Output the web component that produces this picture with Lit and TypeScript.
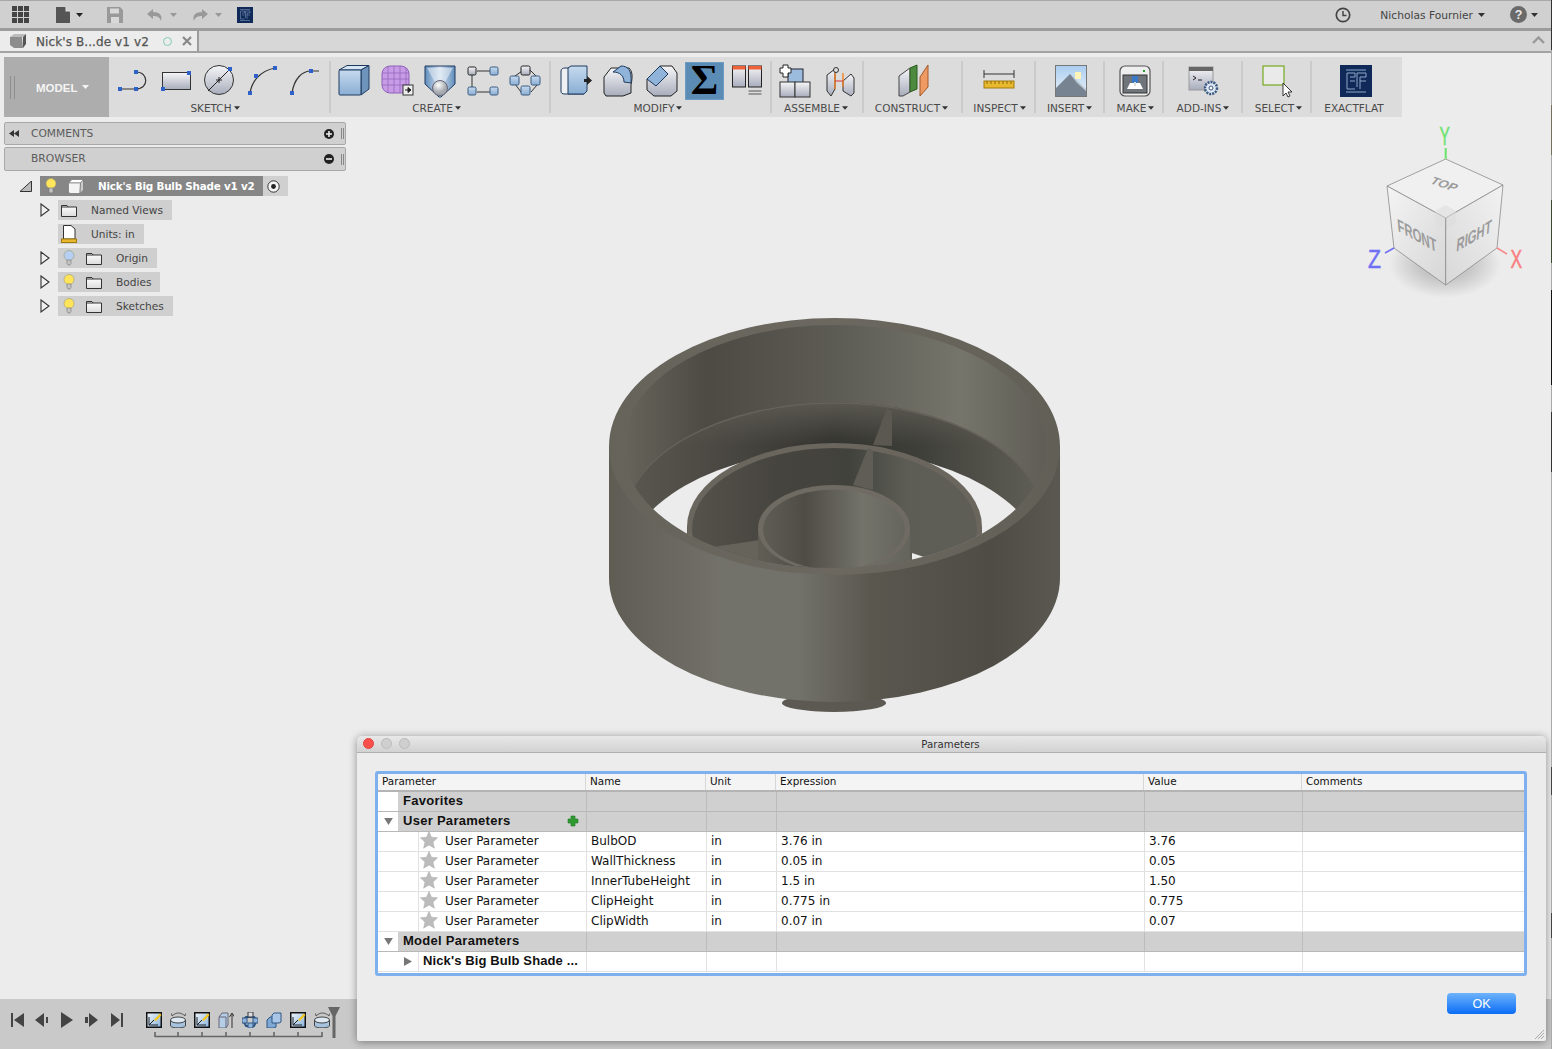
import { LitElement, html, css, svg } from "lit";
import { customElement } from "lit/decorators.js";

const ic = (c: unknown, cls = "ic") => html`<svg class=${cls} viewBox="0 0 32 32">${c}</svg>`;
const sq = (x: number, y: number) => svg`<rect x=${x - 2} y=${y - 2} width="4" height="4" fill="#2f62c8"/>`;
const ef = svg`<rect width="32" height="32" fill="#0f2a58"/><g stroke="#8fa6c8" stroke-width="1" fill="none"><path d="M6 5H26M6 27H26M7 8V24H15M7 8H15V12H10M10 16H15M17 8H26V12H20M20 12V24M20 16H26M17 8V22"/></g>`;
const box = (x: number, y: number, s = 8, f = "url(#gBlue)", st = "#3a5a80") => svg`<rect x=${x} y=${y} width=${s} height=${s} rx="1.5" fill=${f} stroke=${st}/>`;

const icons: Record<string, unknown> = {
  line: svg`<path d="M4 24H20C33 24 33 7 20 7" fill="none" stroke="#333" stroke-width="1.2"/>${sq(4, 24)}${sq(20, 24)}${sq(20, 7)}`,
  rect: svg`<rect x="3.5" y="7.5" width="28" height="17" fill="url(#gSilver)" stroke="#333"/>${sq(4, 24)}${sq(30, 8)}`,
  circle: svg`<circle cx="17" cy="15" r="14.5" fill="url(#gSilver)" stroke="#333"/><path d="M6 26L28 4M14 15H20M17 12V18" stroke="#222" fill="none"/>${sq(28, 4)}`,
  arc: svg`<path d="M5 28C7 16 15 6 30 3" fill="none" stroke="#333" stroke-width="1.2"/>${sq(5, 28)}${sq(11, 11)}${sq(30, 3)}`,
  conic: svg`<path d="M4 28C6 14 14 6 23 6H31" fill="none" stroke="#333" stroke-width="1.2"/>${sq(4, 28)}${sq(23, 6)}`,
  box: svg`<path d="M1 5L9 .5H31L23 5Z" fill="#d6e5f4" stroke="#1d3a5e"/><path d="M23 5L31 .5V24L23 30Z" fill="#6f94bb" stroke="#1d3a5e"/><rect x="1" y="5" width="22" height="25" rx="1" fill="url(#gBlue)" stroke="#1d3a5e"/>`,
  form: svg`<rect x="1" y="1" width="27" height="27" rx="8" fill="#c89be6" stroke="#8f63b8"/><path d="M1 8H28M1 14H28M1 20H28M7 1V28M13 1V28M19 1V28M25 3V26" stroke="#8f63b8" stroke-width=".7"/><rect x="22" y="20" width="10" height="10" fill="#eee" stroke="#333"/><path d="M24 25H27M27 22.5L30 25L27 27.5Z" stroke="#222" fill="#222"/>`,
  shield: svg`<path d="M1 1H31V19L17 32H15L1 19Z" fill="url(#gShield)" stroke="#1d3a5e"/><path d="M3 3L12 19H20L29 3Z" fill="#e8eff8" opacity=".55"/><circle cx="16" cy="23" r="7.5" fill="url(#gSphere)" stroke="#667"/>`,
  pattern: svg`<path d="M10 6H24M5 10V22M10 27H24" stroke="#333"/>${box(1, 2, 8, "url(#gSilver)", "#222")}${box(23, 2)}${box(1, 22)}${box(23, 22)}`,
  circular: svg`<path d="M15 4L5 11M20 5L26 11M27 20L21 27M11 27L5 19" stroke="#333" fill="none"/>${box(11, 1, 9, "url(#gSilver)", "#222")}${box(0, 11, 9)}${box(21, 11, 9)}${box(11, 21, 9)}`,
  press: svg`<path d="M5 3H24V29H5C2 29 1 28 1 26V6C1 4 3 3 5 3Z" fill="#eef0f3" stroke="#1d3a5e"/><path d="M8 3L11 1H27V26L24 29H8Z" fill="url(#gBlue)" stroke="#1d3a5e"/><path d="M24 14H27V11L32 15.5L27 20V17H24Z" fill="#222"/>`,
  fillet: svg`<path d="M1 12L8 3H26C29 6 30 10 28 20V28L20 31H3L1 28Z" fill="url(#gSilver)" stroke="#222"/><path d="M10 7L18 1C25 1 29 5 28 18L21 17C21 11 17 7 10 7Z" fill="#8fb3d9" stroke="#1d3a5e"/>`,
  chamfer: svg`<path d="M1 14L14 1H26L31 8V26L25 31H8L1 25Z" fill="url(#gSilver)" stroke="#222"/><path d="M1 14L14 1L22 9L10 21Z" fill="#8fb3d9" stroke="#1d3a5e"/>`,
  table: svg`<rect x=".5" y="1" width="13" height="21" fill="url(#gSilver)" stroke="#222"/><rect x=".5" y="1" width="13" height="3.5" fill="#f0623a"/><rect x="16.5" y="1" width="13" height="21" fill="url(#gSilver)" stroke="#222"/><rect x="16.5" y="1" width="13" height="3.5" fill="#f0623a"/><path d="M16.5 26H29.5M16.5 29H29.5" stroke="#999" stroke-width="2"/>`,
  joint: svg`<rect x="8" y="4" width="15" height="14" fill="#9bbcdd" stroke="#223"/><rect x="0" y="17" width="15" height="15" fill="url(#gSilver)" stroke="#333"/><rect x="15" y="17" width="15" height="15" fill="url(#gSilver)" stroke="#333"/><path d="M3 0H8V3H11V8H8V12H3V8H0V3H3Z" fill="#fff" stroke="#222"/>`,
  asbuilt: svg`<path d="M2 10L10 4V24L6 31L2 26Z" fill="url(#gSilver)" stroke="#333"/><path d="M18 16L26 9L29 13V28L26 31L18 26Z" fill="url(#gSilver)" stroke="#333"/><circle cx="11" cy="5" r="2.5" fill="#ddd" stroke="#333"/><path d="M10 8V24M18 8V22" stroke="#f08020" stroke-width="1.4"/><path d="M10 16H18" stroke="#d33"/>`,
  plane: svg`<path d="M1 11L12 3V27L5 31H1Z" fill="url(#gSilver)" stroke="#444"/><path d="M12 3L19 0V24L12 27Z" fill="#4d8a3f" stroke="#2c5a22"/><path d="M22 12L30 0V22L22 31Z" fill="#f09a63" stroke="#a0562a"/>`,
  ruler: svg`<path d="M1 5V13M31 5V13M1 9H31" stroke="#333" fill="none"/><rect x="1" y="16" width="30" height="7" fill="#e8b92c" stroke="#a07a10"/><path d="M4 16V19M8 16V19M12 16V19M16 16V19M20 16V19M24 16V19M28 16V19" stroke="#8a6a10"/>`,
  image: svg`<rect x=".5" y=".5" width="31" height="31" fill="url(#gSky)" stroke="#777"/><rect x="20" y="7" width="6" height="7" fill="#fff4b8"/><path d="M1 31V23L15 9L31 26V31Z" fill="#778390"/><path d="M15 9L31 24V26L22 18Z" fill="#b9c4cf"/>`,
  make: svg`<rect x="1" y="1" width="30" height="30" rx="5" fill="#eee" stroke="#555" stroke-width="1.2"/><rect x="24" y="5" width="2" height="2" fill="#2a9a32"/><rect x="4" y="10" width="24" height="18" fill="#70747b" stroke="#333"/><path d="M8 24L11 18H21L24 24Z" fill="#fff"/><rect x="13" y="11" width="6" height="7" fill="#3a78c8"/><rect x="15" y="17" width="2" height="4" fill="#ddd"/>`,
  addin: svg`<rect x="1" y="2" width="24" height="23" fill="url(#gSilver)" stroke="#999"/><rect x="1" y="2" width="24" height="4" fill="#666"/><path d="M5 11L8 13L5 15M10 15H14" stroke="#222" fill="none"/><circle cx="23" cy="23" r="6" fill="#dfe8f3" stroke="#3a5a80" stroke-width="2.5" stroke-dasharray="2 1"/><circle cx="23" cy="23" r="2" fill="#fff" stroke="#3a5a80"/>`,
  select: svg`<rect x="1" y="1" width="21" height="19" fill="#eaeaea" stroke="#76a820" stroke-width="1.2"/><path d="M21 18V31L24 28L26 32L28 31L26 27H30Z" fill="#fff" stroke="#333"/>`,
  ef,
};

const groups = [
  { label: "SKETCH", w: 220, pad: 7, gap: 11, shift: 8, items: ["line", "rect", "circle", "arc", "conic"] },
  { label: "CREATE", w: 218, pad: 7, gap: 11, shift: 7, items: ["box", "form", "shield", "pattern", "circular"] },
  { label: "MODIFY", w: 219, pad: 9, gap: 11, shift: 5, items: ["press", "fillet", "chamfer", "sigma", "table"] },
  { label: "ASSEMBLE", w: 90, pad: 8, gap: 13, shift: 2, items: ["joint", "asbuilt"] },
  { label: "CONSTRUCT", w: 97, pad: 34, gap: 0, shift: 2, items: ["plane"] },
  { label: "INSPECT", w: 71, pad: 20, gap: 0, shift: -2, items: ["ruler"] },
  { label: "INSERT", w: 67, pad: 19, gap: 0, shift: 0, items: ["image"] },
  { label: "MAKE", w: 57, pad: 14, gap: 0, shift: -4, items: ["make"] },
  { label: "ADD-INS", w: 77, pad: 24, gap: 0, shift: -1, items: ["addin"] },
  { label: "SELECT", w: 67, pad: 19, gap: 0, shift: -4, items: ["select"] },
  { label: "EXACTFLAT", w: 89, pad: 28, gap: 0, shift: 5, items: ["ef"], nocaret: true },
];

const bulb = (f: string) => html`<svg class="bulb" viewBox="0 0 12 16"><circle cx="6" cy="5.5" r="5" fill=${f} stroke="#9a9a70" stroke-width=".6"/><path d="M4 10H8V13.5L7 15H5L4 13.5Z" fill="#c4c4c4" stroke="#777" stroke-width=".6"/></svg>`;
const folder = html`<svg class="folder" viewBox="0 0 16 13"><path d="M.5 12.5V1.5H6L7 3H15.5V12.5Z" fill="url(#gFolder)" stroke="#333"/><path d="M.5 3H7" stroke="#333"/></svg>`;
const tri = html`<svg class="tri" viewBox="0 0 10 14"><path d="M1 1L9 7L1 13Z" fill="#f0f0f0" stroke="#333" stroke-width="1.1"/></svg>`;
const star = html`<svg class="star" viewBox="0 0 18 18"><path d="M9 .5L11.5 6.3L17.6 6.8L13 11L14.4 17.2L9 14L3.6 17.2L5 11L.4 6.8L6.5 6.3Z" fill="#bcbcbc" stroke="#aaa" stroke-width=".5"/></svg>`;
const down = html`<svg class="down" viewBox="0 0 10 8"><path d="M0 0H10L5 8Z" fill="#777"/></svg>`;

const params = [
  ["BulbOD", "3.76 in", "3.76"],
  ["WallThickness", "0.05 in", "0.05"],
  ["InnerTubeHeight", "1.5 in", "1.50"],
  ["ClipHeight", "0.775 in", "0.775"],
  ["ClipWidth", "0.07 in", "0.07"],
];

const tlIcons: unknown[] = (() => {
  const sk = svg`<rect x=".75" y=".75" width="14.5" height="14.5" fill="url(#gSketch)" stroke="#111" stroke-width="1.5"/><path d="M3 13L8 8M3 13H12M3 13V5" stroke="#222" fill="none"/><path d="M8 8L14 1.5L15.5 3L10 9Z" fill="#f5c518"/>`;
  const rev = svg`<path d="M2 4C6 0 11 0 15 4M2 4L1.5 1.5M15 4L15.5 1.5" stroke="#555" fill="none"/><path d="M.5 8V14C2 16.5 14 16.5 15.5 14V8" fill="#a6c2df" stroke="#444"/><ellipse cx="8" cy="8" rx="7.5" ry="3" fill="#dfe9f4" stroke="#444"/>`;
  const ext = svg`<path d="M1 5L4 1H10V13L8 16H1Z" fill="#b6cde6" stroke="#667"/><path d="M1 5H8V16" fill="none" stroke="#667"/><path d="M14 16V2M11.5 5L14 1L16.5 5" stroke="#333" fill="none"/>`;
  const cp = svg`<path d="M4 5H12L15 8L12 14H4L1 8Z" fill="none" stroke="#2f5785" stroke-width="2"/><rect x="6" y="0" width="5" height="5" fill="#ddd" stroke="#334"/><rect x="0" y="6" width="5" height="5" fill="#8fb3d9" stroke="#2f5785"/><rect x="11" y="6" width="5" height="5" fill="#8fb3d9" stroke="#2f5785"/><rect x="6" y="11" width="5" height="5" fill="#8fb3d9" stroke="#2f5785"/>`;
  const cmb = svg`<path d="M1 8L4 5H10V15L8 16H1Z" fill="#7fa7d3" stroke="#2f5785"/><path d="M6 3L8 1H15V10L13 11H6Z" fill="#a9c6e6" stroke="#2f5785"/>`;
  return [sk, rev, sk, ext, cp, cmb, sk, rev];
})();

@customElement("app-root")
export class AppRoot extends LitElement {
  static styles = css`
    :host { display: block; width: 1552px; height: 1049px; position: relative; overflow: hidden; background: #ececec; font-family: "DejaVu Sans", sans-serif; color: #333; }
    .defs { position: absolute; width: 0; height: 0; }
    .page { display: flex; flex-direction: column; height: 100%; }
    svg { display: block; flex: none; }
    .edge { position: absolute; right: 0; top: 0; width: 1px; height: 1049px; background: linear-gradient(#333 0 50px, #aaa 50px 105px, #777060 105px 155px, #aaa 155px 200px, #3a4a30 200px 263px, #aaa 263px 290px, #111 290px 385px, #aaa 385px 412px, #333 412px 472px, #aaa 472px 767px, #444 767px 795px, #aaa 795px 913px, #444 913px 938px, #aaa 938px); }
    .top { height: 31px; box-sizing: border-box; background: #d0d0d0; border-top: 1px solid #a9a9a9; border-bottom: 3px solid #9c9c9c; display: flex; align-items: center; padding-left: 12px; }
    .waffle { width: 17px; height: 17px; margin-right: 27px; }
    .doc { width: 14px; height: 16px; margin-right: 6px; }
    .caret { width: 7px; height: 4px; }
    .floppy { width: 16px; height: 16px; margin: 0 24px 0 24px; }
    .arrow { width: 16px; height: 14px; margin-right: 7px; }
    .arrow + .caret { margin-right: 15px; }
    .tefl { width: 16px; height: 16px; }
    .spacer { flex: 1; }
    .clock { width: 16px; height: 16px; margin-right: 29px; }
    .user { font-size: 10.7px; color: #444; margin-right: 5px; padding-top: 2px; }
    .help { width: 17px; height: 17px; margin: 0 4px 0 25px; }
    .top .last { margin-right: 14px; }
    .tabs { height: 22px; box-sizing: border-box; background: #d7d7d7; border-bottom: 2px solid #a3a3a3; display: flex; }
    .tab { width: 199px; height: 22px; box-sizing: border-box; background: #ececec; border-right: 2px solid #9c9c9c; border-bottom: 2px solid #a3a3a3; display: flex; align-items: center; padding-left: 10px; }
    .tabcube { width: 16px; height: 15px; margin-right: 10px; }
    .tabtext { font-size: 12px; color: #555; font-weight: 500; width: 120px; white-space: nowrap; padding-top: 2px; letter-spacing: .1px; -webkit-text-stroke: .25px #555; }
    .tabdot { width: 9px; height: 9px; box-sizing: border-box; border: 1.5px solid #83cdb9; border-radius: 50%; margin-right: 10px; margin-left: 7px; }
    .tabx { width: 10px; height: 10px; }
    .chev { width: 13px; height: 8px; margin: 5px 0 0 auto; }
    .tabs .chev { margin-right: 7px; }
    .main { flex: 1; padding: 4px 4px 0; min-height: 0; }
    .toolbar { width: 1398px; height: 60px; background: #dcdcdc; display: flex; }
    .model { width: 105px; background: #adadad; color: #f4f4f4; font-size: 11px; font-weight: bold; display: flex; align-items: center; padding-left: 6px; box-sizing: border-box; }
    .grip { width: 5px; height: 23px; border-left: 1px solid #8f8f8f; border-right: 1px solid #8f8f8f; box-sizing: border-box; margin-right: 21px; }
    .model span { font-family: "Liberation Sans", sans-serif; font-size: 11.5px; margin-right: 4px; padding-top: 2px; }
    .caretw { width: 7px; height: 4px; }
    .group { box-sizing: border-box; display: flex; flex-direction: column; height: 60px; }
    .irow { display: flex; padding-top: 8px; height: 32px; }
    .ic { width: 32px; height: 32px; overflow: visible; }
    .sigma { width: 39px; height: 38px; margin: -3px -3px 0 -4px; background: #5b8cb5; border: 1px solid #6d9bc2; box-sizing: border-box; font-family: "Liberation Serif", serif; font-size: 42px; line-height: 35px; font-weight: bold; color: #000; text-align: center; flex: none; }
    .glabel { margin-top: 4px; font-size: 10.5px; line-height: 14px; color: #4a4a4a; display: flex; justify-content: center; align-items: center; gap: 2px; white-space: nowrap; }
    .gcaret { width: 6px; height: 4px; }
    .sep { width: 2px; height: 52px; margin-top: 4px; background: #cbcbcb; flex: none; }
    .panel { width: 342px; margin-top: 5px; box-sizing: border-box; background: #d0d0d0; border: 1px solid #a8a8a8; border-radius: 2px; display: flex; align-items: center; font-size: 10.7px; color: #5c5c5c; }
    .comments { height: 23px; }
    .browser { height: 24px; margin-top: 2px; }
    .panel .rw { width: 10px; height: 7px; margin: 0 12px 0 4px; }
    .panel .rwblank { width: 26px; }
    .panel .ptitle { flex: 1; }
    .browser .ptitle { padding-bottom: 2px; }
    .pm { width: 10px; height: 10px; margin-right: 7px; }
    .pbar { width: 3px; height: 11px; border-left: 1px solid #888; border-right: 1px solid #888; box-sizing: border-box; margin-right: 1px; }
    .tree { margin-top: 5px; display: flex; flex-direction: column; gap: 4px; font-size: 10.6px; color: #444; }
    .trow { display: flex; align-items: center; height: 20px; padding-left: 36px; }
    .tri { width: 10px; height: 14px; margin-right: 8px; }
    .trispace { width: 18px; }
    .hl { display: flex; align-items: center; height: 20px; background: #cfcfcf; padding-right: 9px; }
    .bulb { width: 12px; height: 16px; margin: 0 7px 0 5px; }
    .folder { width: 16px; height: 13px; margin: 0 14px 0 4px; }
    .unit { width: 16px; height: 18px; margin: 0 14px 0 3px; }
    .hl .first { margin-left: -1px; }
    .root { padding-left: 16px; }
    .roottri { width: 12px; height: 11px; margin-right: 8px; }
    .rootsel { background: #868686; color: #fff; font-weight: bold; display: flex; align-items: center; height: 20px; width: 223px; font-size: 10.4px; letter-spacing: -.22px; box-sizing: border-box; white-space: nowrap; }
    .rootsel .bulb { margin: 0 11px 0 5px; }
    .rootbox { width: 16px; height: 15px; margin: 0 14px 0 0; }
    .rootend { background: #d0d0d0; width: 25px; height: 20px; display: flex; align-items: center; padding-left: 4px; box-sizing: border-box; }
    .radio { width: 13px; height: 13px; }
    .timeline { height: 50px; background: #c9c9c9; position: relative; display: flex; align-items: flex-start; padding: 13px 0 0 10px; box-sizing: border-box; flex: none; }
    .trans { width: 113px; height: 16px; margin-right: 23px; }
    .tlist { display: flex; gap: 8px; }
    .ti { width: 16px; height: 16px; }
    .track { position: absolute; left: 154px; top: 8px; width: 190px; height: 34px; overflow: visible; }
    .model3d { position: absolute; left: 590px; top: 300px; width: 490px; height: 430px; }
    .cube { position: absolute; left: 1350px; top: 120px; width: 190px; height: 190px; }
    .cube text { font-family: "Liberation Sans", sans-serif; }
    .dialog { position: absolute; left: 357px; top: 736px; width: 1189px; height: 305px; background: #ececec; border-radius: 5px 5px 2px 2px; box-shadow: 0 1px 8px rgba(0,0,0,.4); display: flex; flex-direction: column; box-sizing: border-box; }
    .dtitle { height: 16px; flex: none; background: linear-gradient(#e8e8e8, #d2d2d2); border-bottom: 1px solid #b0b0b0; border-radius: 5px 5px 0 0; display: flex; align-items: center; justify-content: center; font-size: 10.2px; color: #333; position: relative; padding-right: 2px; }
    .lights { position: absolute; left: 6px; top: 2px; display: flex; gap: 7px; }
    .light { width: 11px; height: 11px; border-radius: 50%; background: #cfcfcf; border: .5px solid #bbb; box-sizing: border-box; }
    .light.red { background: #fc4f4c; border-color: #e0443e; }
    .ring { margin: 18px 0 0 18px; width: 1152px; height: 205px; box-sizing: border-box; border: 3px solid #7fb0ee; border-radius: 3px; background: #fff; }
    .row { display: grid; grid-template-columns: 209px 120px 70px 368px 158px 1fr; height: 20px; box-sizing: border-box; border-bottom: 1px solid #e1e1e1; font-size: 12px; line-height: 19px; color: #111; }
    .row > div { border-right: 1px solid #e1e1e1; padding-left: 4px; white-space: nowrap; box-sizing: border-box; }
    .row > div:first-child { padding: 0; display: flex; position: relative; }
    .row > div:last-child { border-right: 0; }
    .hdr { height: 18px; grid-template-columns: 208px 120px 70px 368px 158px 1fr; border-bottom: 2px solid #b4b4b4; background: #f4f4f4; font-size: 10.4px; line-height: 14px; color: #111; }
    .hdr > div { border-right: 1px solid #d6d6d6; }
    .hdr > div:first-child { padding-left: 4px; display: block; }
    .grp { border-bottom: 1px solid #b8b8b8; }
    .grp > div { background: #d0d0d0; border-right: 1px solid #bcbcbc; }
    .grp .gname { font-family: "Liberation Sans", sans-serif; font-weight: bold; font-size: 13px; line-height: 17px; letter-spacing: .28px; color: #111; padding-left: 5px; flex: 1; position: relative; }
    .grp > div:first-child { background: #d0d0d0; }
    .gutter { width: 20px; background: #fff; flex: none; display: flex; align-items: center; justify-content: center; }
    .down { width: 9px; height: 7px; }
    .pcell { display: flex; align-items: center; width: 100%; padding-left: 40px; box-sizing: border-box; }
    .pin { border-left: 1px solid #e1e1e1; display: flex; align-items: center; height: 19px; flex: 1; padding-left: 1px; }
    .star { width: 18px; height: 18px; margin-right: 7px; margin-top: -3px; }
    .plus { position: absolute; left: 189px; top: 3px; width: 12px; height: 12px; }
    .nick { font-family: "Liberation Sans", sans-serif; font-weight: bold; font-size: 13px; letter-spacing: .12px; color: #111; padding-left: 4px; line-height: 18px; }
    .play { display: flex; justify-content: center; align-items: center; margin-left: 20px; flex: none; height: 19px; width: 21px; border-right: 1px solid #e1e1e1; box-sizing: border-box; }
    .playt { width: 8px; height: 9px; }
    .actions { display: flex; justify-content: flex-end; padding: 17px 30px 0 0; }
    .ok { width: 69px; height: 21px; border-radius: 4px; background: linear-gradient(#6db3fb, #0b6df6); color: #fff; font-size: 12.5px; display: flex; align-items: center; justify-content: center; font-family: "Liberation Sans", sans-serif; }
    .resize { position: absolute; right: 1px; bottom: 1px; width: 11px; height: 11px; }
  `;

  render() {
    const caret = (f = "#333", cls = "caret") => html`<svg class=${cls} viewBox="0 0 7 4"><path d="M0 0H7L3.5 4Z" fill=${f}/></svg>`;
    return html`
      <svg class="defs">
        <defs>
          <linearGradient id="gBlue" x1="0" y1="0" x2="0" y2="1"><stop offset="0" stop-color="#c6daee"/><stop offset="1" stop-color="#8aaed4"/></linearGradient>
          <linearGradient id="gSketch" x1="0" y1="0" x2="1" y2="1"><stop offset="0" stop-color="#f4f8fc"/><stop offset="1" stop-color="#86b1dc"/></linearGradient>
          <linearGradient id="gSilver" x1="0" y1="0" x2="0" y2="1"><stop offset="0" stop-color="#f6f6f8"/><stop offset="1" stop-color="#a8adbc"/></linearGradient>
          <linearGradient id="gShield" x1="0" y1="0" x2="1" y2="0"><stop offset="0" stop-color="#5f8cbb"/><stop offset=".5" stop-color="#d9e5f2"/><stop offset="1" stop-color="#5f8cbb"/></linearGradient>
          <radialGradient id="gSphere" cx=".4" cy=".3"><stop offset="0" stop-color="#fff"/><stop offset="1" stop-color="#a5a9b0"/></radialGradient>
          <linearGradient id="gSky" x1="0" y1="0" x2="0" y2="1"><stop offset="0" stop-color="#a9cdf0"/><stop offset="1" stop-color="#eef4fa"/></linearGradient>
          <linearGradient id="gFolder" x1="0" y1="0" x2="0" y2="1"><stop offset="0" stop-color="#fff"/><stop offset="1" stop-color="#dcdcdc"/></linearGradient>
        </defs>
      </svg>
      <div class="page">
        <div class="top">
          <svg class="waffle" viewBox="0 0 17 17"><path fill="#444" d="M0 0h5v5H0zM6 0h5v5H6zM12 0h5v5h-5zM0 6h5v5H0zM6 6h5v5H6zM12 6h5v5h-5zM0 12h5v5H0zM6 12h5v5H6zM12 12h5v5h-5z"/></svg>
          <svg class="doc" viewBox="0 0 14 16"><path d="M0 0H9L14 5V16H0Z" fill="#555"/><path d="M9.5 0L14 4.5H9.5Z" fill="#ddd"/></svg>
          ${caret("#222")}
          <svg class="floppy" viewBox="0 0 16 16"><path d="M0 0H13L16 3V16H0Z" fill="#999"/><rect x="3" y="1.5" width="9" height="5" fill="#d8d8d8"/><rect x="4" y="10" width="8" height="6" fill="#d8d8d8"/></svg>
          <svg class="arrow" viewBox="0 0 16 14"><path d="M6 1L0 6L6 11V8C10 8 13 9 14 13C16 7 12 4 6 4Z" fill="#999"/></svg>
          ${caret("#999")}
          <svg class="arrow" viewBox="0 0 16 14"><path d="M10 1L16 6L10 11V8C6 8 3 9 2 13C0 7 4 4 10 4Z" fill="#999"/></svg>
          ${caret("#999")}
          <svg class="tefl" viewBox="0 0 32 32">${ef}</svg>
          <div class="spacer"></div>
          <svg class="clock" viewBox="0 0 16 16"><circle cx="8" cy="8" r="6.7" fill="none" stroke="#444" stroke-width="1.7"/><path d="M8 4V8.5H11.5" fill="none" stroke="#444" stroke-width="1.5"/></svg>
          <span class="user">Nicholas Fournier</span>
          ${caret("#333")}
          <svg class="help" viewBox="0 0 17 17"><circle cx="8.5" cy="8.5" r="8.5" fill="#6a6a6a"/><text x="8.5" y="13" text-anchor="middle" font-family="Liberation Sans" font-weight="bold" font-size="12.5" fill="#e8e8e8">?</text></svg>
          ${caret("#333", "caret last")}
        </div>
        <div class="tabs">
          <div class="tab">
            <svg class="tabcube" viewBox="0 0 16 15"><path d="M0 3L4 0H16L13 3Z" fill="#bbb"/><path d="M0 3H12L13 14H4L0 11Z" fill="#8c8c8c"/><path d="M13 3L16 0V10L13 14Z" fill="#555"/></svg>
            <span class="tabtext">Nick's B...de v1 v2</span>
            <span class="tabdot"></span>
            <svg class="tabx" viewBox="0 0 10 10"><path d="M1 1L9 9M9 1L1 9" stroke="#888" stroke-width="2.2"/></svg>
          </div>
          <svg class="chev" viewBox="0 0 13 8"><path d="M1 7L6.5 1.5L12 7" fill="none" stroke="#999" stroke-width="2.4"/></svg>
        </div>
        <div class="main">
          <div class="toolbar">
            <div class="model"><i class="grip"></i><span>MODEL</span>${caret("#f4f4f4", "caretw")}</div>
            ${groups.map((g, i) => html`
              <div class="group" style="width:${g.w}px">
                <div class="irow" style="padding-left:${g.pad}px;gap:${g.gap}px">
                  ${g.items.map((n) => n === "sigma" ? html`<div class="sigma">Σ</div>` : ic(icons[n]))}
                </div>
                <div class="glabel" style="padding-right:${Math.max(g.shift, 0)}px;padding-left:${Math.max(-g.shift, 0)}px">${g.label}${g.nocaret ? "" : caret("#333", "gcaret")}</div>
              </div>
              ${i < groups.length - 1 ? html`<div class="sep"></div>` : ""}
            `)}
          </div>
          <div class="panel comments">
            <svg class="rw" viewBox="0 0 10 7"><path d="M5 0V7L0 3.5ZM10 0V7L5 3.5Z" fill="#333"/></svg>
            <span class="ptitle">COMMENTS</span>
            <svg class="pm" viewBox="0 0 10 10"><circle cx="5" cy="5" r="5" fill="#222"/><path d="M2 5H8M5 2V8" stroke="#eee" stroke-width="1.6"/></svg>
            <i class="pbar"></i>
          </div>
          <div class="panel browser">
            <i class="rwblank"></i>
            <span class="ptitle">BROWSER</span>
            <svg class="pm" viewBox="0 0 10 10"><circle cx="5" cy="5" r="5" fill="#222"/><path d="M2 5H8" stroke="#eee" stroke-width="1.6"/></svg>
            <i class="pbar"></i>
          </div>
          <div class="tree">
            <div class="trow root">
              <svg class="roottri" viewBox="0 0 12 11"><path d="M0 10.5H11.5V0Z" fill="#bbb" stroke="#333"/></svg>
              <div class="rootsel">${bulb("#ffe45c")}
                <svg class="rootbox" viewBox="0 0 16 15"><path d="M.5 4L4 .5H15.5L13 4Z" fill="#fff" stroke="#777" stroke-width=".7"/><path d="M.5 4H12.5L12 14.5H2L.5 13Z" fill="#f4f4f4" stroke="#777" stroke-width=".7"/><path d="M12.5 4L15.5 .5V11L12 14.5Z" fill="#ccc" stroke="#777" stroke-width=".7"/></svg>
                <span>Nick's Big Bulb Shade v1 v2</span></div>
              <div class="rootend"><svg class="radio" viewBox="0 0 13 13"><circle cx="6.5" cy="6.5" r="5.7" fill="#f4f4f4" stroke="#333"/><circle cx="6.5" cy="6.5" r="2.4" fill="#222"/></svg></div>
            </div>
            <div class="trow">${tri}<div class="hl"><span class="first">${folder}</span>Named Views</div></div>
            <div class="trow"><i class="trispace"></i><div class="hl"><svg class="unit" viewBox="0 0 16 18"><path d="M2.5 .5H10L14 4V14H2.5Z" fill="#fff" stroke="#333"/><rect x=".5" y="14" width="15" height="3.5" fill="#e8b92c" stroke="#a07a10"/></svg>Units: in</div></div>
            <div class="trow">${tri}<div class="hl">${bulb("#b6d0f4")}${folder}Origin</div></div>
            <div class="trow">${tri}<div class="hl">${bulb("#ffe45c")}${folder}Bodies</div></div>
            <div class="trow">${tri}<div class="hl">${bulb("#ffe45c")}${folder}Sketches</div></div>
          </div>
        </div>
        <div class="timeline">
          <svg class="trans" viewBox="0 0 113 16">
            <path fill="#444" d="M1 1H3V15H1ZM14 1V15L4 8ZM25 8L34 1V15ZM36 5H38V11H36ZM51 0L63 8L51 16ZM75 5H78V11H75ZM79 1L88 8L79 15ZM101 1L110 8L101 15ZM111 1H113V15H111Z"/>
          </svg>
          <div class="tlist">${tlIcons.map((c) => html`<svg class="ti" viewBox="0 0 16 16">${c}</svg>`)}</div>
          <svg class="track" viewBox="0 0 190 34">
            <path d="M1 29.5H168M1 25V30M24 25V30M48 25V30M72 25V30M96 25V30M120 25V30M144 25V30M168 25V30" stroke="#666" stroke-width="1.6" fill="none"/>
            <path d="M174 0H186L181.5 9V31H178.5V9Z" fill="#666"/>
          </svg>
        </div>
      </div>

      <svg class="model3d" viewBox="590 300 490 430">
        <defs>
          <linearGradient id="mOuter" gradientUnits="userSpaceOnUse" x1="609" y1="0" x2="1060" y2="0"><stop offset="0" stop-color="#5f5c54"/><stop offset=".25" stop-color="#72716a"/><stop offset=".42" stop-color="#72726a"/><stop offset=".58" stop-color="#5a574f"/><stop offset=".85" stop-color="#4f4c45"/><stop offset="1" stop-color="#5a5850"/></linearGradient>
          <linearGradient id="mRim" gradientUnits="userSpaceOnUse" x1="609" y1="0" x2="1060" y2="0"><stop offset="0" stop-color="#66635a"/><stop offset=".5" stop-color="#6c685f"/><stop offset="1" stop-color="#625f57"/></linearGradient>
          <linearGradient id="mInner" gradientUnits="userSpaceOnUse" x1="623" y1="0" x2="1046" y2="0"><stop offset="0" stop-color="#67645b"/><stop offset=".2" stop-color="#4d4a44"/><stop offset=".5" stop-color="#5c5b54"/><stop offset=".8" stop-color="#75756b"/><stop offset="1" stop-color="#5f5d55"/></linearGradient>
          <linearGradient id="mLower" gradientUnits="userSpaceOnUse" x1="623" y1="0" x2="1046" y2="0"><stop offset="0" stop-color="#5b5850"/><stop offset=".3" stop-color="#45433e"/><stop offset=".5" stop-color="#32322e"/><stop offset=".7" stop-color="#3f3f3a"/><stop offset="1" stop-color="#626158"/></linearGradient>
          <linearGradient id="mShade" gradientUnits="userSpaceOnUse" x1="0" y1="403" x2="0" y2="445"><stop offset="0" stop-color="#5f5d55" stop-opacity=".85"/><stop offset="1" stop-color="#5f5d55" stop-opacity="0"/></linearGradient>
          <linearGradient id="mMid" gradientUnits="userSpaceOnUse" x1="692" y1="0" x2="978" y2="0"><stop offset="0" stop-color="#55524b"/><stop offset=".3" stop-color="#46443f"/><stop offset=".55" stop-color="#42423d"/><stop offset=".75" stop-color="#5d5d56"/><stop offset="1" stop-color="#5f5e56"/></linearGradient>
          <linearGradient id="mTube" gradientUnits="userSpaceOnUse" x1="762" y1="0" x2="906" y2="0"><stop offset="0" stop-color="#605d55"/><stop offset=".3" stop-color="#4f4c46"/><stop offset=".7" stop-color="#73736a"/><stop offset="1" stop-color="#66655d"/></linearGradient>
          <clipPath id="mClip"><ellipse cx="834.5" cy="446.5" rx="211.5" ry="121.5"/></clipPath>
        </defs>
        <ellipse cx="834" cy="703" rx="52" ry="9" fill="#5b5951"/>
        <path d="M609 446V578A225.5 124 0 0 0 1060 578V446Z" fill="url(#mOuter)"/>
        <ellipse cx="834.5" cy="446.5" rx="225.5" ry="128.5" fill="url(#mRim)"/>
        <ellipse cx="834.5" cy="446.5" rx="211.5" ry="121.5" fill="url(#mInner)"/>
        <g clip-path="url(#mClip)">
          <ellipse cx="834.5" cy="524" rx="211.5" ry="121.5" fill="url(#mLower)"/>
          <ellipse cx="834.5" cy="524" rx="211.5" ry="121.5" fill="url(#mShade)"/>
          <ellipse cx="834.5" cy="524" rx="211" ry="121" fill="none" stroke="#65625a" stroke-width="1.4"/>
          <ellipse cx="834.5" cy="571" rx="211" ry="121" fill="#ececec"/>
          <path d="M887 408L873 445L892 446V411Z" fill="#5a5850"/>
          <path d="M687 527V640H982V527Z" fill="url(#mMid)"/>
          <ellipse cx="834.5" cy="527" rx="147.5" ry="84" fill="#6a665d"/>
          <ellipse cx="834.5" cy="529" rx="142.5" ry="81" fill="url(#mMid)"/>
          <path d="M912 553L930 559L912 562Z" fill="#ececec"/>
          <path d="M868 448L853 485L873 490L873 450Z" fill="#5f5d55"/>
          <path d="M713 547L760 540L762 562L747 558Z" fill="#66635b"/>
          <path d="M758 528V600H910V528Z" fill="url(#mTube)"/>
          <ellipse cx="834" cy="528.5" rx="76" ry="43.5" fill="#6f6b62"/>
          <ellipse cx="834" cy="529.5" rx="71" ry="40" fill="url(#mTube)"/>
        </g>
      </svg>

      <svg class="cube" viewBox="1350 120 190 190">
        <defs>
          <radialGradient id="cShadow"><stop offset="0" stop-color="#000" stop-opacity=".3"/><stop offset="1" stop-color="#000" stop-opacity="0"/></radialGradient>
          <linearGradient id="cL" x1="0" y1="0" x2="1" y2="1"><stop offset="0" stop-color="#f4f4f4"/><stop offset="1" stop-color="#d6d6d6"/></linearGradient>
          <linearGradient id="cR" x1="1" y1="0" x2="0" y2="1"><stop offset="0" stop-color="#f2f2f2"/><stop offset="1" stop-color="#d8d8d8"/></linearGradient>
        </defs>
        <ellipse cx="1445" cy="264" rx="56" ry="34" fill="url(#cShadow)"/>
        <path d="M1445.7 159L1503 185L1445.7 218L1387 186Z" fill="#f0f0f0" stroke="#8c8c8c" stroke-width=".8"/>
        <path d="M1387 186L1445.7 218V285L1394 248Z" fill="url(#cL)" stroke="#8c8c8c" stroke-width=".8"/>
        <path d="M1445.7 218L1503 185L1497 248L1445.7 285Z" fill="url(#cR)" stroke="#8c8c8c" stroke-width=".8"/>
        <path d="M1445.7 205L1456 211V223L1445.7 229L1435 223V211Z" fill="#dcdcdc" opacity=".55"/>
        <path d="M1445.7 218V229" stroke="#8c8c8c" stroke-width=".8"/>
        <text transform="matrix(.95 .32 -.6 .7 1429 183)" font-size="13" font-weight="bold" fill="#9b9b9b">TOP</text>
        <text transform="matrix(.878 .479 .14 1.4 1398 231)" font-size="13" font-weight="bold" fill="#9b9b9b">FRONT</text>
        <text transform="matrix(.867 -.499 -.12 1.4 1456 252)" font-size="13" font-weight="bold" fill="#9b9b9b">RIGHT</text>
        <path d="M1445.7 148V159" stroke="#6be36b" stroke-width="2"/>
        <path d="M1394 248L1385 253" stroke="#6f6ff5" stroke-width="1.5"/>
        <path d="M1497 248L1507 254" stroke="#f78a8a" stroke-width="1.5"/>
        <text transform="translate(1439.5 145) scale(.62 1)" font-size="25" fill="#6fe36f" stroke="#6fe36f" stroke-width=".5">Y</text>
        <text transform="translate(1368 268) scale(.85 1)" font-size="25" fill="#6f6ff5" stroke="#6f6ff5" stroke-width=".5">Z</text>
        <text transform="translate(1510.5 268) scale(.7 1)" font-size="25" fill="#f78080" stroke="#f78080" stroke-width=".5">X</text>
      </svg>

      <div class="dialog">
        <div class="dtitle">
          <div class="lights"><i class="light red"></i><i class="light"></i><i class="light"></i></div>
          Parameters
        </div>
        <div class="ring">
          <div class="row hdr"><div>Parameter</div><div>Name</div><div>Unit</div><div>Expression</div><div>Value</div><div>Comments</div></div>
          <div class="row grp"><div><i class="gutter"></i><span class="gname">Favorites</span></div><div></div><div></div><div></div><div></div><div></div></div>
          <div class="row grp"><div><i class="gutter">${down}</i><span class="gname">User Parameters</span>
            <svg class="plus" viewBox="0 0 12 12"><path d="M4 1H8V4H11V8H8V11H4V8H1V4H4Z" fill="#2f9a31" stroke="#1f7a22" stroke-width=".6"/></svg></div><div></div><div></div><div></div><div></div><div></div></div>
          ${params.map((p) => html`
            <div class="row"><div><div class="pcell"><div class="pin">${star}User Parameter</div></div></div><div>${p[0]}</div><div>in</div><div>${p[1]}</div><div>${p[2]}</div><div></div></div>
          `)}
          <div class="row grp"><div><i class="gutter">${down}</i><span class="gname">Model Parameters</span></div><div></div><div></div><div></div><div></div><div></div></div>
          <div class="row"><div><div class="play"><svg class="playt" viewBox="0 0 8 9"><path d="M0 0L8 4.5L0 9Z" fill="#777"/></svg></div><span class="nick">Nick's Big Bulb Shade ...</span></div><div></div><div></div><div></div><div></div><div></div></div>
        </div>
        <div class="actions"><div class="ok">OK</div></div>
        <svg class="resize" viewBox="0 0 11 11"><path d="M1 10L10 1M4 10L10 4M7 10L10 7" stroke="#aaa" fill="none"/></svg>
      </div>
      <i class="edge"></i>
    `;
  }
}
